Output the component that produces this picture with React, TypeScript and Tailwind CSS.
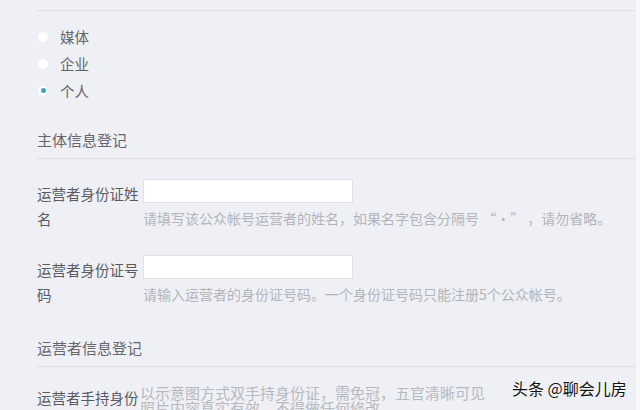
import React from "react";

const font = { fontFamily: '"Noto Sans CJK SC", "Noto Sans", sans-serif' };

function Radio({ label, checked }: { label: string; checked?: boolean }) {
  return (
    <div className="flex h-[27px] items-center">
      <span className="flex h-[10px] w-[10px] items-center justify-center rounded-full bg-white">
        {checked && <span className="h-[5px] w-[5px] rounded-full bg-[#3aa6c4]" />}
      </span>
      <span className="ml-[12px] text-[14.5px] text-[#64656b]">{label}</span>
    </div>
  );
}

function FieldRow({ label, hint }: { label: string; hint: string }) {
  return (
    <div className="flex">
      <div className="w-[103px] pt-[2px] text-[14.5px] leading-[25px] text-[#5a5b62]">{label}</div>
      <div className="ml-[3px] flex flex-col">
        <div className="h-[24px] w-[210px] border border-[#e1e2e8] bg-white" />
        <div className="mt-[3px] whitespace-nowrap text-[14px] leading-[24px] text-[#b3b4bb]">{hint}</div>
      </div>
    </div>
  );
}

export default function App() {
  return (
    <div className="relative flex h-[410px] w-[640px] overflow-hidden bg-[#eff0f5]" style={font}>
      <div className="w-[636px] pt-[10px]">
        <div className="ml-[37px] border-t border-[#dddee4]" />
        <div className="ml-[37px] mt-[12px] pl-[1px]">
          <Radio label="媒体" />
          <Radio label="企业" />
          <Radio label="个人" checked />
        </div>
        <div className="ml-[37px] mt-[19px] flex h-[36px] items-center border-b border-[#dddee4] text-[15px] text-[#66676e]">
          主体信息登记
        </div>
        <div className="ml-[37px] mt-[20px]">
          <FieldRow
            label="运营者身份证姓名"
            hint={"请填写该公众帐号运营者的姓名，如果名字包含分隔号 \u201c·\u201d ，请勿省略。"}
          />
          <div className="mt-[24px]">
            <FieldRow label="运营者身份证号码" hint="请输入运营者的身份证号码。一个身份证号码只能注册5个公众帐号。" />
          </div>
        </div>
        <div className="ml-[37px] mt-[24px] flex h-[36px] items-center border-b border-[#dddee4] text-[15px] text-[#66676e]">
          运营者信息登记
        </div>
        <div className="ml-[37px] mt-[18px] flex">
          <div className="w-[103px] text-[14.5px] leading-[25px] text-[#5a5b62]">运营者手持身份证</div>
          <div className="text-[15px] leading-[15px] text-[#b8b9c0]">
            <div>以示意图方式双手持身份证，需免冠，五官清晰可见</div>
            <div>照片内容真实有效，不得做任何修改。</div>
          </div>
        </div>
      </div>
      <div className="w-[4px] bg-[#f8f8fa]" />
      <div
        className="absolute left-[512px] top-[377px] text-[16px] leading-[22px] text-[#111]"
        style={{ textShadow: "0 0 2px #fff, 0 0 2px #fff" }}
      >
        头条 @聊会儿房
      </div>
    </div>
  );
}
